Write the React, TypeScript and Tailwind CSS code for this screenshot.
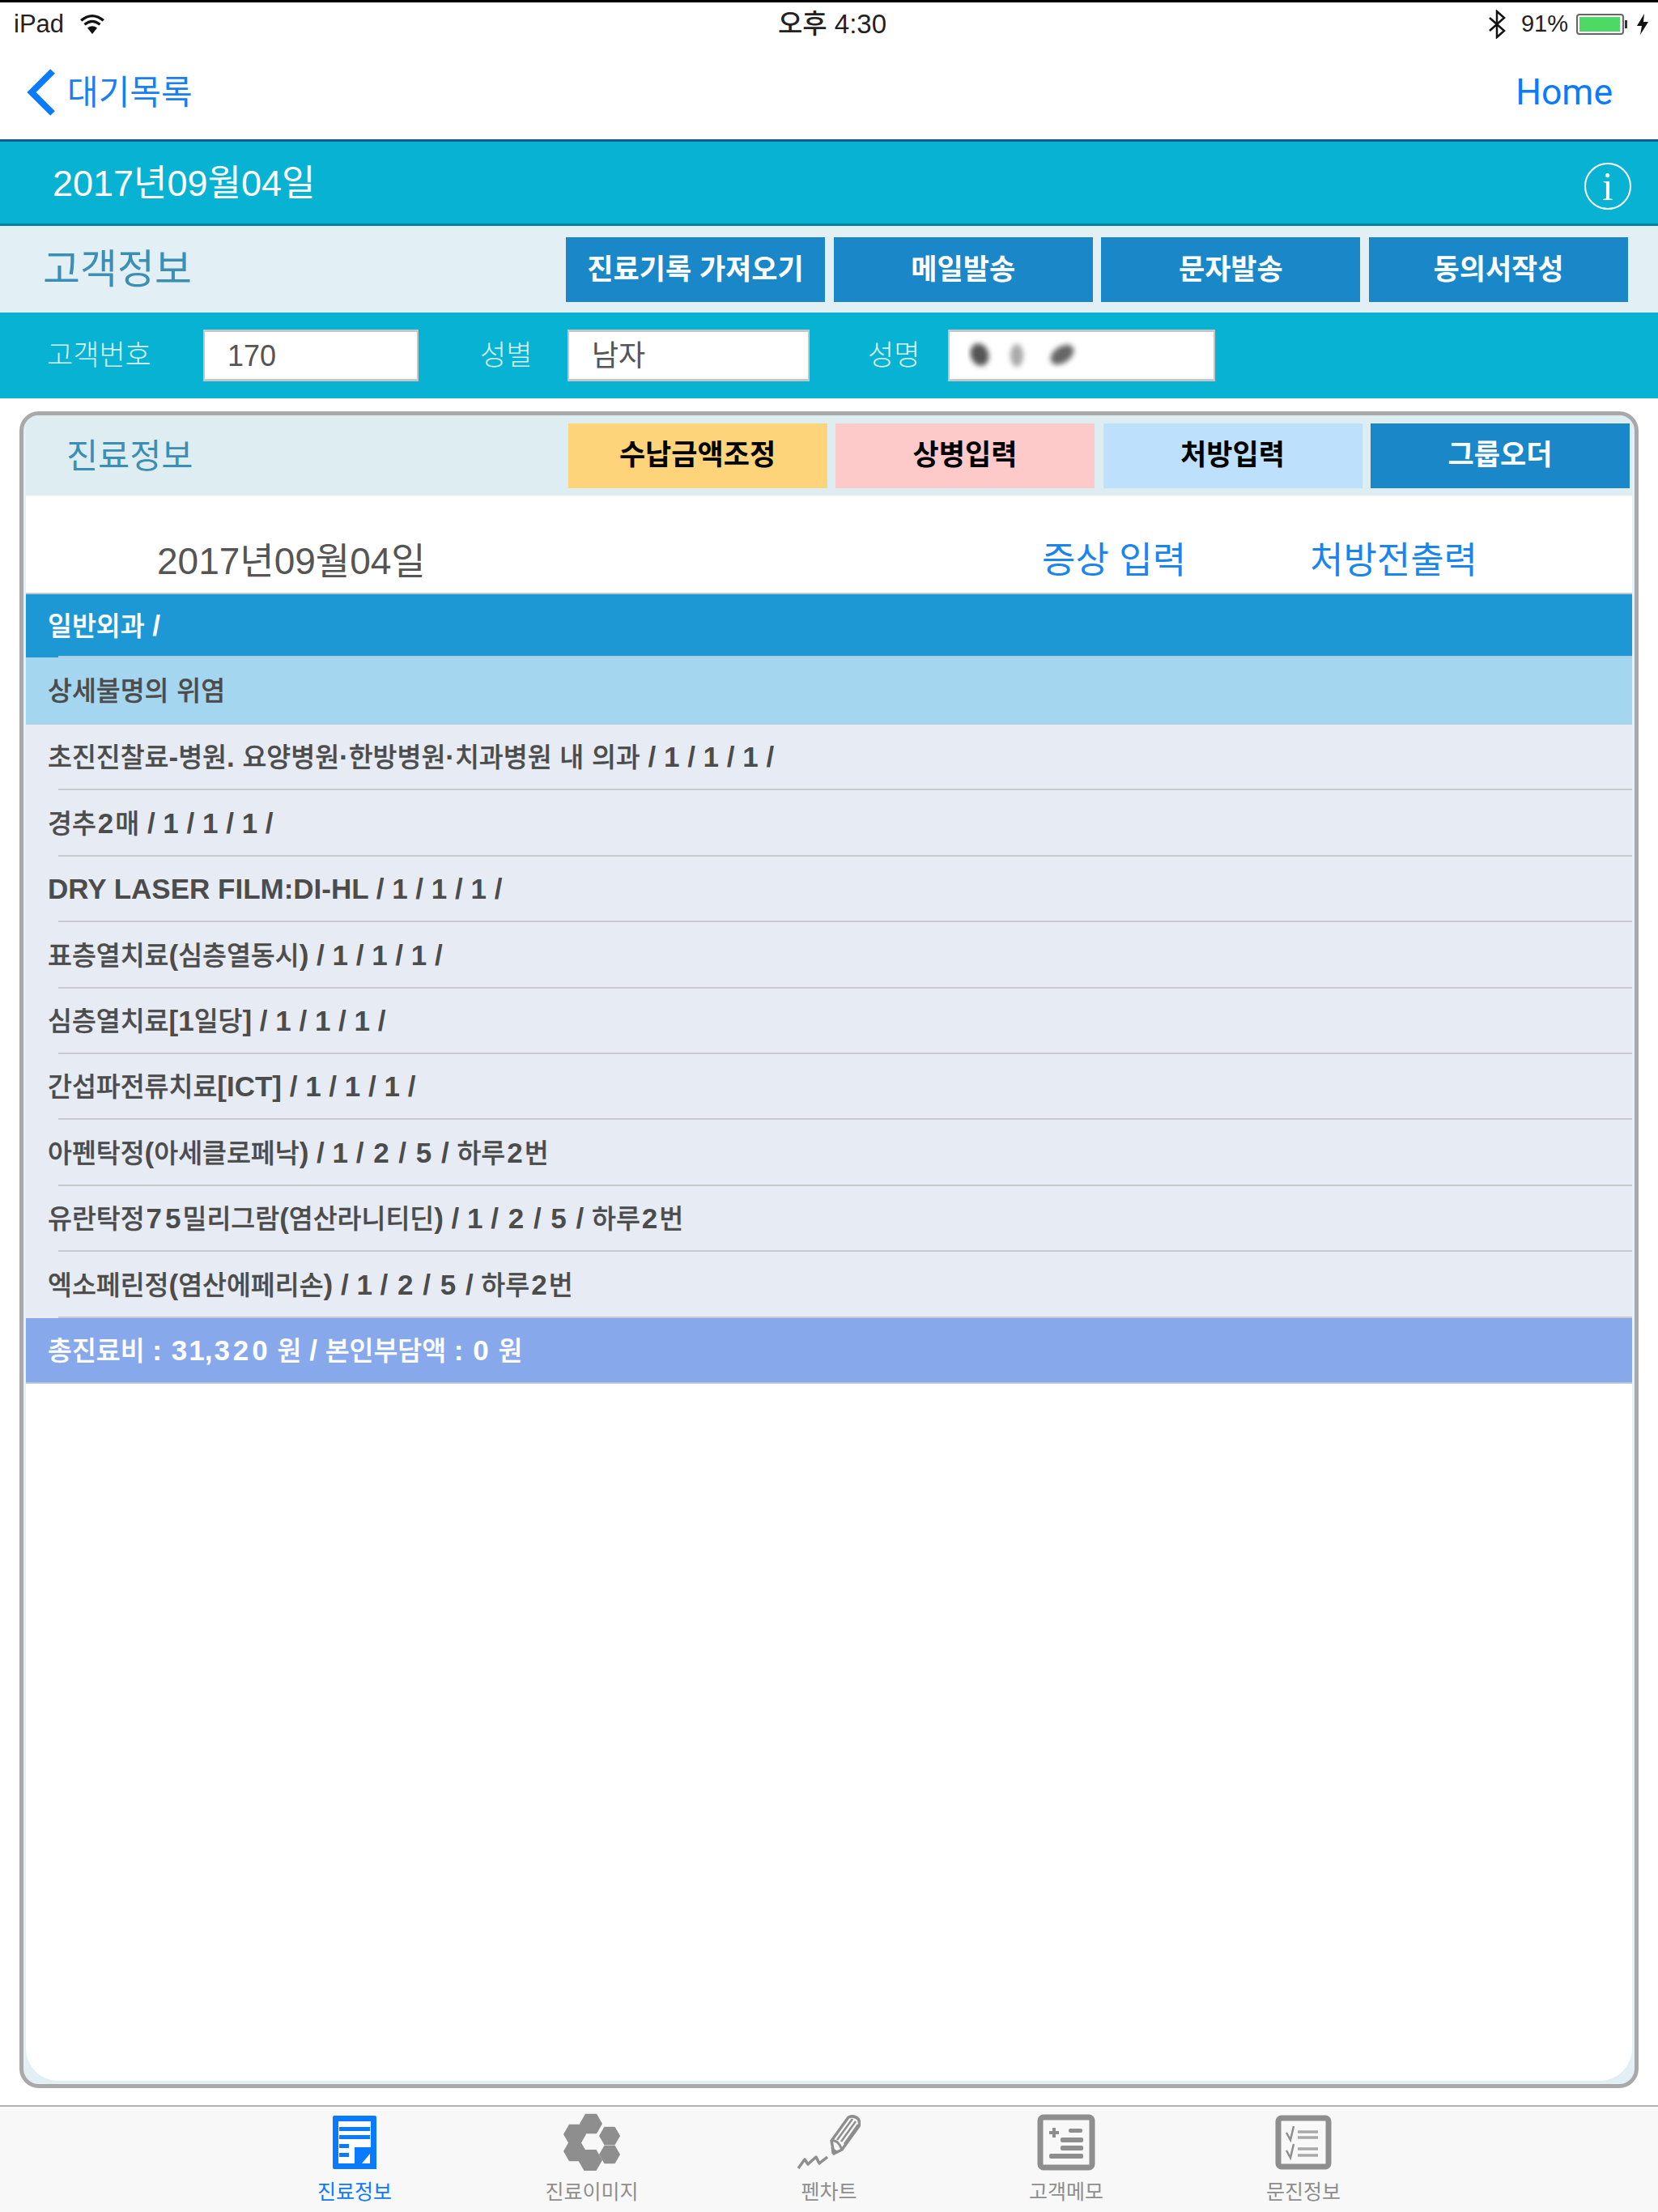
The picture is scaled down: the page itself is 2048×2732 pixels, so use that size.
import React from "react";

const font = "font-['Liberation_Sans','Noto_Sans_CJK_KR',sans-serif]";

const rows = [
  "초진진찰료-병원. 요양병원·한방병원·치과병원 내 의과 / 1 / 1 / 1 /",
  "경추2매 / 1 / 1 / 1 /",
  "DRY LASER FILM:DI-HL / 1 / 1 / 1 /",
  "표층열치료(심층열동시) / 1 / 1 / 1 /",
  "심층열치료[1일당] / 1 / 1 / 1 /",
  "간섭파전류치료[ICT] / 1 / 1 / 1 /",
  "아펜탁정(아세클로페낙) / 1 / 2 / 5 / 하루2번",
  "유란탁정75밀리그람(염산라니티딘) / 1 / 2 / 5 / 하루2번",
  "엑소페린정(염산에페리손) / 1 / 2 / 5 / 하루2번",
];

// hangul and latin runs have different sizes in the original font,
// and its digits other than 1 sit wider than Liberation's
function Mixed({ text }: { text: string }) {
  return (
    <>
      {text.split(/([가-힣]+|[02-9])/).map((part, i) => {
        if (i % 2 === 0) {
          return (
            <span key={i} className="text-[35px] font-bold whitespace-pre">
              {part}
            </span>
          );
        }
        if (/[02-9]/.test(part)) {
          return (
            <span key={i} className="text-[35px] font-bold px-[2px]">
              {part}
            </span>
          );
        }
        return (
          <span key={i} className="text-[32.5px] font-medium [-webkit-text-stroke:0.3px_currentColor]">
            {part}
          </span>
        );
      })}
    </>
  );
}

function DocIcon() {
  return (
    <svg width="54" height="66" viewBox="0 0 54 66">
      <rect width="54" height="66" rx="2" fill="#0a7aff" />
      <rect x="7" y="7" width="40" height="52" fill="#fff" />
      <rect x="8" y="14" width="38" height="5" fill="#0a7aff" />
      <rect x="8" y="24" width="38" height="5" fill="#0a7aff" />
      <rect x="8" y="35" width="12" height="5" fill="#0a7aff" />
      <rect x="8" y="46" width="12" height="5" fill="#0a7aff" />
      <rect x="27" y="39" width="27" height="27" fill="#0a7aff" />
      <path d="M36 59 L46 47 V59 Z" fill="#fff" />
    </svg>
  );
}

function HexIcon() {
  const hexes: [number, number, number][] = [
    [35, 13, 14],
    [15, 26, 14],
    [58, 28, 13],
    [15, 47, 14],
    [34, 58, 15],
    [58, 51, 13],
  ];
  return (
    <svg width="72" height="72" viewBox="0 0 72 72" fill="#8e8e8e">
      {hexes.map(([x, y, r], i) => (
        <polygon
          key={i}
          points={`${x - r},${y} ${x - r / 2},${y - r * 0.87} ${x + r / 2},${y - r * 0.87} ${x + r},${y} ${x + r / 2},${y + r * 0.87} ${x - r / 2},${y + r * 0.87}`}
        />
      ))}
    </svg>
  );
}

function PencilIcon() {
  return (
    <svg width="78" height="68" viewBox="0 0 78 68" fill="none" stroke="#8e8e8e">
      <path d="M1 66 L9 55 L13 61 L23 52 L27 60 L37 52" strokeWidth="3.5" strokeLinejoin="round" />
      <path d="M45 48 L42 32 L63 3 Q70 0 75 5 Q78 10 76 14 L55 43 Z" strokeWidth="3.5" strokeLinejoin="round" fill="#f8f8f8" />
      <path d="M42 32 Q50 30 55 43" strokeWidth="3" />
      <path d="M49 31 L68 5 M54 33 L72 8 M58 36 L75 12" strokeWidth="2.5" />
      <path d="M42 40 L43 48 L49 45 Z" fill="#8e8e8e" strokeWidth="1" />
    </svg>
  );
}

function MemoIcon() {
  return (
    <svg width="72" height="70" viewBox="0 0 72 70" fill="#8e8e8e">
      <rect x="4" y="4" width="64" height="62" rx="4" fill="none" stroke="#8e8e8e" strokeWidth="7" />
      <path d="M15 21 H19 V17 H23 V21 H27 V25 H23 V29 H19 V25 H15 Z" />
      <rect x="39" y="18" width="17" height="5" rx="2" />
      <rect x="29" y="29" width="28" height="6" rx="2" />
      <rect x="29" y="39" width="28" height="6" rx="2" />
      <rect x="15" y="49" width="42" height="6" rx="2" />
    </svg>
  );
}

function CheckIcon() {
  return (
    <svg width="70" height="68" viewBox="0 0 70 68" fill="none" stroke="#8e8e8e">
      <rect x="4" y="4" width="62" height="60" rx="4" strokeWidth="7" />
      <path d="M14 22 L19 31 L23 14 M14 44 L19 53 L23 36" strokeWidth="2.5" />
      <path d="M28 21 H53 M28 28 H53 M28 42 H53 M28 50 H53" stroke="#a9a9a9" strokeWidth="3.5" />
    </svg>
  );
}

const tabs = [
  { label: "진료정보", icon: <DocIcon />, active: true },
  { label: "진료이미지", icon: <HexIcon /> },
  { label: "펜차트", icon: <PencilIcon /> },
  { label: "고객메모", icon: <MemoIcon /> },
  { label: "문진정보", icon: <CheckIcon /> },
];

function Field({
  label,
  value,
  labelClass,
  inputClass,
  children,
}: {
  label: string;
  value?: string;
  labelClass: string;
  inputClass: string;
  children?: React.ReactNode;
}) {
  return (
    <>
      <span className={`${labelClass} shrink-0 whitespace-nowrap text-[35px] text-[#d9f5fa] font-light`}>{label}</span>
      <div
        className={`${inputClass} shrink-0 h-[64px] bg-white border-y-[3px] border-x-2 border-[#c6c6c6] flex items-center pl-[28px] pt-[2px] text-[36px] text-[#555]`}
      >
        {value}
        {children}
      </div>
    </>
  );
}

// list row: the separator starts inset from the left, the text does not
function Row({ bg, line, height, children }: { bg: string; line: string; height: string; children: React.ReactNode }) {
  return (
    <div className={`${bg} ${height} shrink-0 pl-[40px]`}>
      <div className={`${line} h-full border-b-2 flex items-center`}>
        <span className="-ml-[13px] pt-[2px] whitespace-nowrap">{children}</span>
      </div>
    </div>
  );
}

export default function App() {
  return (
    <div className={`${font} w-[2048px] h-[2732px] flex flex-col bg-white overflow-hidden`}>
      {/* status bar */}
      <div className="h-[56px] border-t-[3px] border-black grid grid-cols-3 items-center text-[31px] text-[#222] leading-none">
        <div className="flex items-center pl-[17px] gap-[19px]">
          <span>iPad</span>
          <svg width="32" height="24" viewBox="0 0 32 24" fill="#111">
            <path d="M16 24 L10 16.5 Q16 12 22 16.5 Z" />
            <path d="M7.5 13.5 Q16 6.5 24.5 13.5 L26.5 11 Q16 2.5 5.5 11 Z" />
            <path d="M3.5 8.5 Q16 -2 28.5 8.5 L31 6 Q16 -6 1 6 Z" />
          </svg>
        </div>
        <div className="text-center text-[33px] font-medium pl-[8px]">오후 4:30</div>
        <div className="flex items-center justify-end pr-[12px]">
          <svg width="22" height="36" viewBox="0 0 22 36" fill="none" stroke="#111" strokeWidth="2.5">
            <path d="M2 10 L20 26 L11 34 V2 L20 10 L2 26" />
          </svg>
          <span className="ml-[19px] text-[29px]">91%</span>
          <div className="ml-[10px] w-[59px] h-[26px] border-2 border-[#666] rounded-[4px] p-[2px] flex">
            <div className="w-[50px] bg-[#4cd964]" />
          </div>
          <div className="w-[3px] h-[10px] bg-[#333] ml-[1px]" />
          <svg className="ml-[12px]" width="14" height="26" viewBox="0 0 14 26" fill="#111">
            <path d="M9 0 L0 15 H6 L4 26 L14 10 H8 Z" />
          </svg>
        </div>
      </div>

      {/* nav bar */}
      <div className="h-[119px] border-b-[3px] border-[#0b5f8e] flex items-center justify-between">
        <div className="flex items-center">
          <svg className="ml-[33px]" width="36" height="58" viewBox="0 0 36 58" fill="none" stroke="#0a7aff" strokeWidth="8">
            <path d="M32 3 L6 29 L32 55" />
          </svg>
          <span className="ml-[14px] text-[42px] text-[#1a7ff5]">대기목록</span>
        </div>
        <span className="pr-[56px] text-[44.5px] text-[#0a7aff] font-['Roboto',sans-serif]">Home</span>
      </div>

      {/* date band */}
      <div className="h-[104px] bg-[#08b2d2] border-b-[3px] border-[#05819f] flex items-center justify-between pl-[65px] pr-[33px]">
        <span className="text-[45px] text-white pt-[2px]">2017년09월04일</span>
        <div className="mt-[9px] w-[58px] h-[58px] rounded-full border-2 border-white flex items-center justify-center text-white text-[50px] font-['Liberation_Serif',serif] leading-none">
          i
        </div>
      </div>

      {/* customer header */}
      <div className="h-[107px] bg-[#e2f0f5] flex items-center pl-[53px] pr-[37px]">
        <span className="text-[50px] text-[#3b8fb5] flex-1 pt-[2px]">고객정보</span>
        <div className="flex gap-[10.67px] text-[35px] font-bold text-white text-center">
          {["진료기록 가져오기", "메일발송", "문자발송", "동의서작성"].map((t) => (
            <div key={t} className="w-[320px] h-[80px] bg-[#1a87c9] flex items-center justify-center pt-[2px]">
              {t}
            </div>
          ))}
        </div>
      </div>

      {/* customer fields */}
      <div className="h-[106px] bg-[#08b2d2] flex items-center pl-[58px]">
        <Field label="고객번호" value="170" labelClass="w-[130px]" inputClass="w-[266px] ml-[63px]" />
        <Field label="성별" value="남자" labelClass="w-[62px] ml-[76px]" inputClass="w-[299px] ml-[46px]" />
        <Field label="성명" labelClass="w-[62px] ml-[72px]" inputClass="w-[330px] ml-[37px]">
          <svg className="-ml-[6px]" width="140" height="44" viewBox="0 0 140 44" fill="#555">
            <g className="blur-[3px]">
              <ellipse cx="15" cy="20" rx="11" ry="14" transform="rotate(-20 15 20)" />
              <ellipse cx="61" cy="21" rx="8" ry="14" fill="#aaa" />
              <ellipse cx="117" cy="20" rx="16" ry="10" transform="rotate(-35 117 20)" fill="#666" />
            </g>
          </svg>
        </Field>
      </div>

      {/* treatment card */}
      <div className="ml-[24px] mt-[16px] w-[2000px] h-[2071px] border-[5px] border-[#a9a9a9] rounded-[24px] bg-[#e2f0f5] overflow-hidden px-[3px] pb-[4px] flex flex-col">
        <div className="h-[99px] shrink-0 flex items-center pl-[50px] bg-[#deedf2]">
          <span className="text-[42.5px] text-[#3b8fb5] flex-1 pt-[2px]">진료정보</span>
          <div className="flex gap-[10.5px] pr-[3px] text-[35px] font-bold text-center text-black">
            <div className="w-[320px] h-[80px] bg-[#fdd47a] flex items-center justify-center">수납금액조정</div>
            <div className="w-[320px] h-[80px] bg-[#fdc9c9] flex items-center justify-center">상병입력</div>
            <div className="w-[320px] h-[80px] bg-[#bde0fc] flex items-center justify-center">처방입력</div>
            <div className="w-[320px] h-[80px] bg-[#1a87c9] text-white flex items-center justify-center">그룹오더</div>
          </div>
        </div>

        <div className="flex-1 bg-white rounded-bl-[40px] rounded-br-[40px] flex flex-col text-[#4c4c4c]">
          <div className="h-[122px] shrink-0 border-b-2 border-[#c3c9ce] flex items-center pt-[42px]">
            <span className="ml-[162px] w-[1093px] text-[46px] text-[#555]">2017년09월04일</span>
            <span className="w-[331px] text-[45px] text-[#1a85f0]">증상 입력</span>
            <span className="text-[45px] text-[#1a85f0]">처방전출력</span>
          </div>
          <Row bg="bg-[#1e98d4] text-white" line="border-[#a9cde3]" height="h-[78px]">
            <Mixed text="일반외과 /" />
          </Row>
          <Row bg="bg-[#a5d6f0]" line="border-[#a5d6f0]" height="h-[83px]">
            <Mixed text="상세불명의 위염" />
          </Row>
          {rows.map((r) => (
            <Row key={r} bg="bg-[#e7ecf4]" line="border-[#c6cace]" height="h-[81.4px]">
              <Mixed text={r} />
            </Row>
          ))}
          <div className="h-[81px] shrink-0 bg-[#87a9ec] border-b-2 border-[#b9c4d6] flex items-center pl-[27px] pt-[2px] text-white">
            <span>
              <Mixed text="총진료비 : 31,320 원 / 본인부담액 : 0 원" />
            </span>
          </div>
        </div>
      </div>

      {/* tab bar */}
      <div className="mt-auto h-[132px] border-t-2 border-[#b2b2b2] bg-[#f8f8f8] flex justify-center">
        {tabs.map((t) => (
          <div key={t.label} className="w-[293px] flex flex-col items-center">
            <div className="h-[88px] shrink-0 flex items-center blur-[0.5px]">{t.icon}</div>
            <span className={`-mt-[1px] text-[25px] ${t.active ? "text-[#0a7aff]" : "text-[#8e8e8e]"}`}>{t.label}</span>
          </div>
        ))}
      </div>
    </div>
  );
}
